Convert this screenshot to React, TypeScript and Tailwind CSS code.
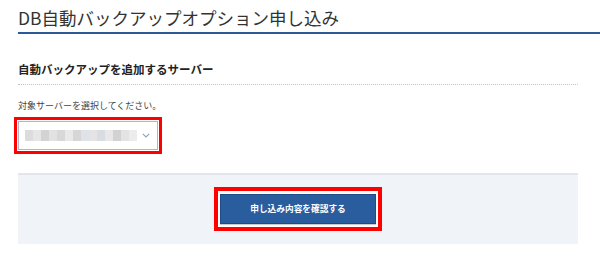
import React from 'react';

const JP_FONT = 'font-["Noto_Sans_CJK_JP","Noto_Sans",sans-serif]';

// blurred server name in the screenshot, drawn as pixel blocks
const BLUR_BLOCKS = [
  '#dcdcdc', '#e6e6e6', '#d3d3d3', '#e2e2e2', '#d8d8d8', '#e9e9e9', '#d6d6d6',
  '#dfe2e6', '#e4e4e4', '#d9dce0', '#e8e8e8', '#d2d2d2', '#e3e3e3', '#ececec',
];

function Chevron() {
  return (
    <svg width="8" height="5" viewBox="0 0 8 5" fill="none" className="shrink-0">
      <path d="M0.8 0.8 L4 4 L7.2 0.8" stroke="#8fa3c0" strokeWidth="1.1" />
    </svg>
  );
}

function ServerSelect() {
  return (
    <div className="inline-block border-[3px] border-[#ff0000] p-[1px] bg-white">
      <div className="flex h-[29px] w-[140px] items-center border border-[#a9b8cc] bg-white pl-[6px] pr-[9px]">
        <div className="flex h-[11px] flex-1">
          {BLUR_BLOCKS.map((color, i) => (
            <div key={i} className="h-full w-[8px]" style={{ backgroundColor: color }} />
          ))}
        </div>
        <div className="ml-[5px]">
          <Chevron />
        </div>
      </div>
    </div>
  );
}

export default function App() {
  return (
    <div className={`${JP_FONT} h-[261px] w-[600px] overflow-hidden bg-white text-[#333333]`}>
      <div className="ml-[18px] border-b-2 border-[#2b5a9b] pt-[6px] pb-[3px]">
        <h1 className="text-[17.5px] leading-[23px] font-normal text-[#333333]">
          DB自動バックアップオプション申し込み
        </h1>
      </div>

      <div className="pl-[18px] pr-[22px]">
        <div className="mt-[27px] border-b border-dotted border-[#c4c4c4] pb-[7px]">
          <h2 className="text-[11.5px] leading-[16px] font-bold text-[#222222]">
            自動バックアップを追加するサーバー
          </h2>
        </div>

        <p className="mt-[15px] text-[9px] leading-[12px] text-[#444444]">
          対象サーバーを選択してください。
        </p>

        <div className="mt-[5px] -ml-[4px]">
          <ServerSelect />
        </div>

        <div className="mt-[19px] flex h-[71px] items-center justify-center border-t-2 border-[#e2e6eb] bg-[#f0f4f8]">
          <div className="mt-[-1px] border-4 border-[#ff0000] bg-white px-[2px] py-[3px]">
            <button
              type="button"
              className="flex h-[30px] w-[156px] items-center justify-center border border-[#1f4b86] bg-[#2a5d9e] text-[8.7px] font-bold text-white shadow-[0_1px_1px_rgba(0,0,0,0.2)]"
            >
              申し込み内容を確認する
            </button>
          </div>
        </div>
      </div>
    </div>
  );
}
